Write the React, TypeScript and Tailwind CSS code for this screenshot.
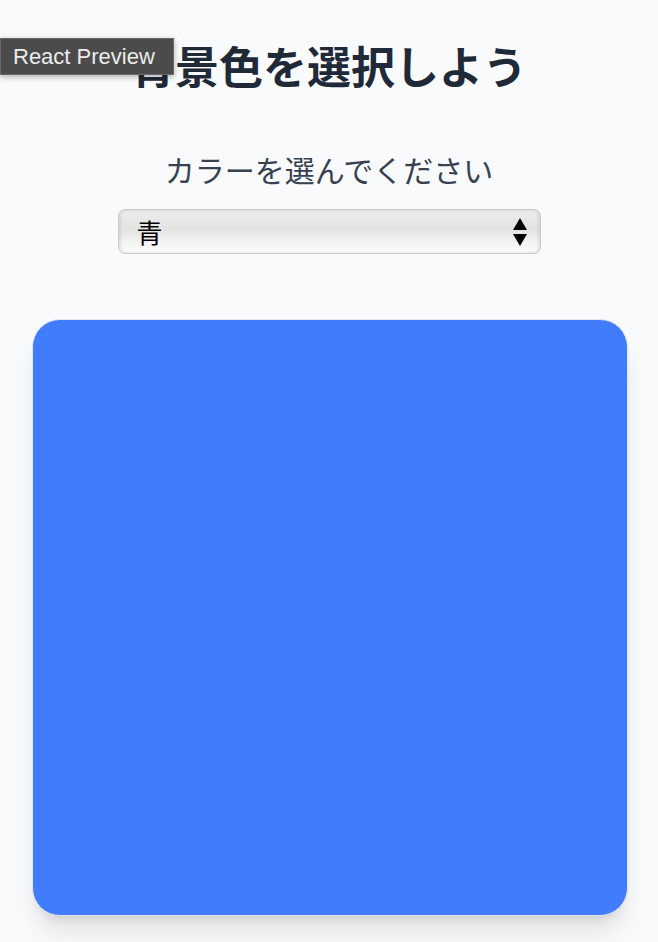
import { useState } from "react";

const COLORS = [
  { value: "blue", label: "青", hex: "#407cfc" },
  { value: "red", label: "赤", hex: "#ef4444" },
  { value: "green", label: "緑", hex: "#22c55e" },
  { value: "yellow", label: "黄", hex: "#eab308" },
];

const jp = "font-['Noto_Sans_CJK_JP','Noto_Sans',sans-serif]";

export default function App() {
  const [color, setColor] = useState("blue");
  const current = COLORS.find((c) => c.value === color) ?? COLORS[0];

  return (
    <div className={`relative min-h-screen bg-[#f9fafb] flex flex-col items-center pt-[36px] ${jp}`}>
      <div className="absolute left-0 top-[38px] flex h-[37px] w-[174px] items-center border border-[#6a6a6a] bg-[#4b4b4b] pl-[12px] font-['Liberation_Sans',Arial,sans-serif] text-[22px] text-[#ececec] shadow-[0_2px_6px_rgba(0,0,0,0.3)]">
        React Preview
      </div>

      <h1 className="text-[44px] font-bold leading-[58px] text-[#1f2937]">背景色を選択しよう</h1>

      <p className="mt-[56px] text-[30px] leading-[38px] text-[#374151]">カラーを選んでください</p>

      <div className="relative mt-[21px] h-[45px] w-[423px]">
        <select
          value={color}
          onChange={(e) => setColor(e.target.value)}
          className="h-full w-full appearance-none rounded-[7px] border border-[#c9c9cc] bg-[linear-gradient(#ececec,#e3e3e3_45%,#f3f3f3_75%,#fbfbfb)] pl-[18px] text-[26px] text-black shadow-[inset_2px_0_3px_rgba(0,0,0,0.08),inset_-2px_0_3px_rgba(0,0,0,0.08)] outline-none"
        >
          {COLORS.map((c) => (
            <option key={c.value} value={c.value}>
              {c.label}
            </option>
          ))}
        </select>
        <svg className="pointer-events-none absolute right-[14px] top-[9px]" width="14" height="28" viewBox="0 0 14 28">
          <path d="M7 0 L14 12 L0 12 Z" fill="#000" />
          <path d="M0 16 L14 16 L7 28 Z" fill="#000" />
        </svg>
      </div>

      <div
        className="ml-[2px] mt-[65px] h-[597px] w-[596px] rounded-[28px] border border-[#e5e7eb] shadow-xl"
        style={{ backgroundColor: current.hex }}
      />
    </div>
  );
}
